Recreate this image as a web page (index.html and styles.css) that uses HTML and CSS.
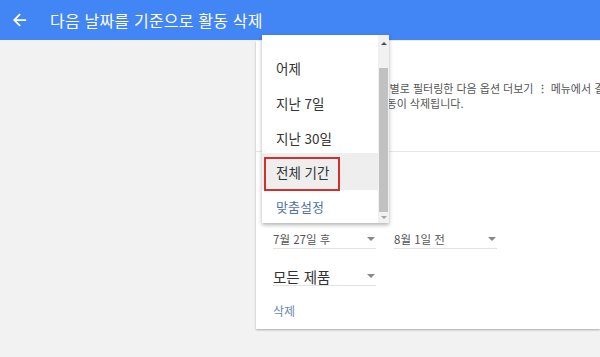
FILE: index.html
```html
<!DOCTYPE html>
<html lang="ko">
<head>
<meta charset="utf-8">
<link rel="stylesheet" href="styles.css">
</head>
<body>
<header class="topbar">
  <svg class="back" width="14" height="14" viewBox="0 0 16 16"><path d="M15 7H3.8l5-5L7.4.6 0 8l7.4 7.4 1.4-1.4-5-5H15z" fill="#fff"/></svg>
  <h1 class="title">다음 날짜를 기준으로 활동 삭제</h1>
</header>
<main class="main">
  <section class="card">
    <div class="card-top">
      <p class="desc">날짜, 주제 또는 제품 유형별로 필터링한 다음 옵션 더보기 <span class="dots">⋮</span> 메뉴에서 결과 삭제를 선택하세요.</p>
      <p class="desc">선택한 기간의 모든 내 활동이 삭제됩니다.</p>
    </div>
    <div class="card-body">
      <div class="range-select"></div>
      <div class="date-row">
        <div class="select small"><span>7월 27일 후</span><i class="caret"></i></div>
        <div class="select small"><span>8월 1일 전</span><i class="caret"></i></div>
      </div>
      <div class="select large"><span>모든 제품</span><i class="caret"></i></div>
      <a class="delete">삭제</a>
    </div>
  </section>
</main>
<div class="dropdown">
  <ul class="options">
    <li class="opt">어제</li>
    <li class="opt">지난 7일</li>
    <li class="opt">지난 30일</li>
    <li class="opt active"><span class="mark"></span>전체 기간</li>
    <li class="opt custom">맞춤설정</li>
  </ul>
  <div class="scrollbar">
    <i class="sarrow up"></i>
    <div class="thumb"></div>
    <i class="sarrow down"></i>
  </div>
</div>
</body>
</html>
```
FILE: styles.css
```css
* { box-sizing: border-box; }
html, body { margin: 0; padding: 0; }
body {
  width: 600px;
  height: 357px;
  overflow: hidden;
  background: #f2f2f2;
  font-family: "Noto Sans CJK KR", "Noto Sans", sans-serif;
  position: relative;
}
.topbar {
  height: 40px;
  background: #4285f4;
  display: flex;
  align-items: center;
  padding-left: 13px;
}
.back { display: block; }
.title {
  margin: 0 0 0 23px;
  color: #fff;
  font-size: 16px;
  font-weight: 400;
  line-height: 20px;
  letter-spacing: 0.2px;
}
.main {
  padding-left: 256px;
  padding-top: 1px;
}
.card {
  width: 344px;
  height: 288px;
  background: #fff;
  box-shadow: 0 1px 2px rgba(0,0,0,0.3);
  overflow: hidden;
}
.card-top {
  height: 111px;
  border-bottom: 1px solid #e6e6e6;
  padding: 40px 0 0 17px;
}
.desc {
  margin: 0;
  font-size: 11px;
  line-height: 15px;
  color: #555;
  white-space: nowrap;
}
.dots { font-weight: 700; color: #666; }
.card-body {
  padding: 0 0 0 17px;
}
.range-select { height: 78px; }
.date-row {
  display: flex;
  gap: 18px;
}
.select {
  display: flex;
  align-items: center;
  justify-content: space-between;
  width: 103px;
  border-bottom: 1px solid #e3e3e3;
  color: #555;
  padding-right: 1px;
}
.select.small { height: 19px; font-size: 11.5px; }
.select.large {
  height: 28px;
  margin-top: 9px;
  font-size: 14.5px;
  line-height: 16px;
  color: #333;
  align-items: flex-end;
  padding-bottom: 0;
}
.select.large .caret { margin-bottom: 7px; }
.caret {
  width: 0; height: 0;
  border-left: 4px solid transparent;
  border-right: 4px solid transparent;
  border-top: 4px solid #888;
}
.delete {
  display: block;
  margin-top: 16px;
  font-size: 12px;
  color: #6b87b5;
}
.dropdown {
  position: absolute;
  left: 262px;
  top: 35px;
  width: 127px;
  height: 188px;
  background: #fff;
  box-shadow: 0 2px 4px rgba(0,0,0,0.3);
  display: flex;
}
.options {
  list-style: none;
  margin: 0;
  padding: 15px 0 0 0;
  flex: 1;
}
.opt {
  position: relative;
  height: 35px;
  display: flex;
  align-items: center;
  padding-left: 14px;
  font-size: 13.5px;
  color: #333;
}
.opt.active { background: #eeeeee; height: 37px; margin-top: -2px; }
.mark {
  position: absolute;
  left: 2px; top: 4px;
  width: 76px; height: 34px;
  border: 2px solid #d32f2f;
}
.opt.custom { color: #4f73a6; font-size: 13px; height: 32px; }
.scrollbar {
  width: 11px;
  background: #f1f1f1;
  display: flex;
  flex-direction: column;
  align-items: center;
}
.sarrow {
  width: 0; height: 0;
  border-left: 3px solid transparent;
  border-right: 3px solid transparent;
}
.sarrow.up { border-bottom: 3px solid #505050; margin: 7px 0 23px; }
.sarrow.down { border-top: 3px solid #a3a3a3; margin: 4px 0 0; }
.thumb {
  width: 9px;
  height: 144px;
  background: #c1c1c1;
}
```
